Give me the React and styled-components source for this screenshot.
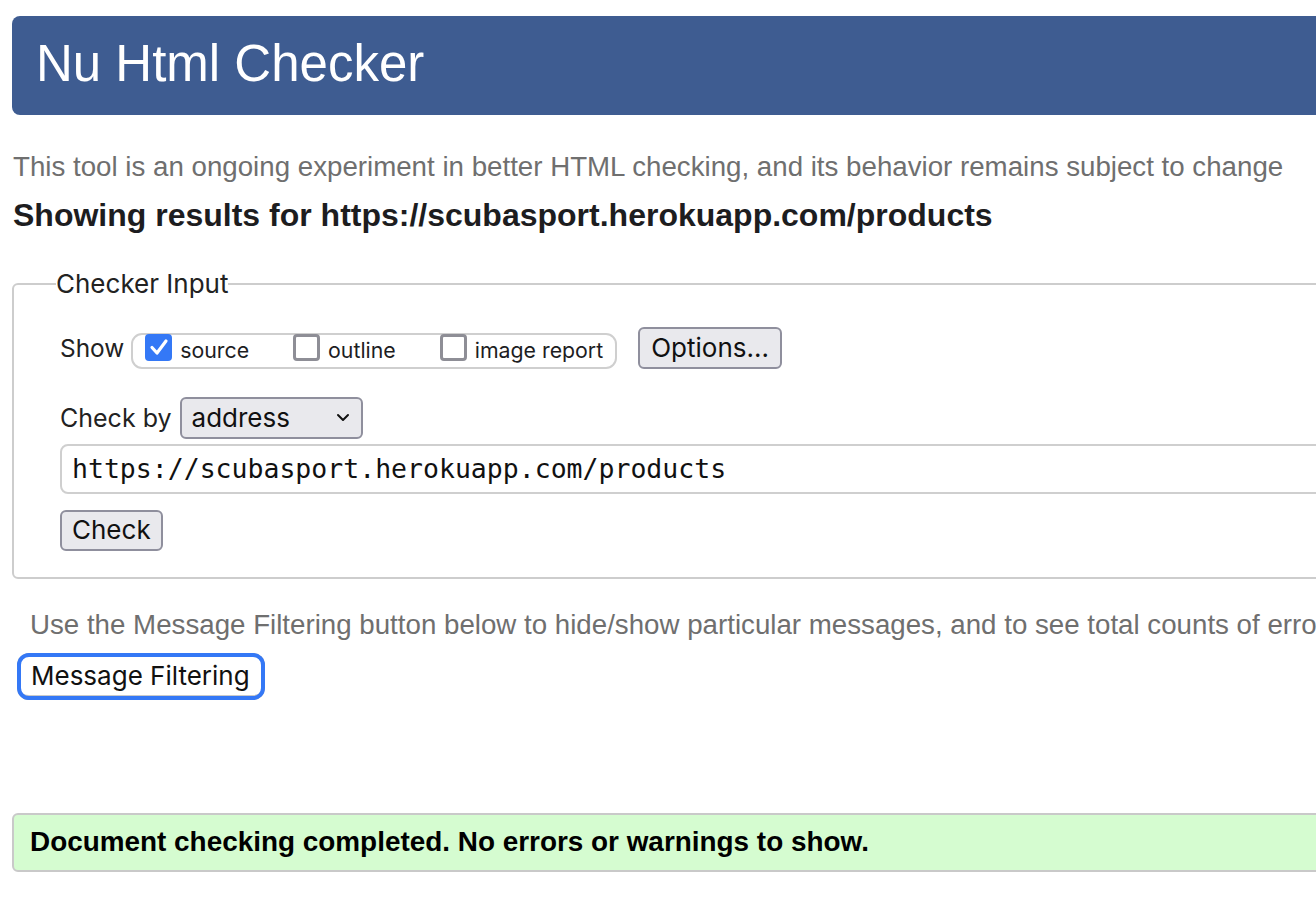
import React from "react";
import styled, { createGlobalStyle } from "styled-components";

const Global = createGlobalStyle`
  html, body { margin: 0; padding: 0; background: #fff; overflow: hidden; }
  body { font-family: "Liberation Sans", Arial, sans-serif; color: #222; }
`;

const Page = styled.div`
  width: 1560px;
  padding: 16px 0 0 12px;
  box-sizing: border-box;
`;

const Header = styled.header`
  height: 99px;
  background: #3e5c91;
  border-radius: 8px;
  padding: 0 0 4px 24px;
  box-sizing: border-box;
`;

const Title = styled.h1`
  margin: 0;
  font-family: "Liberation Sans", Arial, sans-serif;
  font-weight: 400;
  font-size: 51px;
  line-height: 95px;
  color: #fff;
`;

const Intro = styled.p`
  margin: 0;
  padding: 35.5px 0 0 1px;
  font-size: 27.7px;
  line-height: 32px;
  color: #6f6f6f;
  white-space: nowrap;
`;

const ResultsHeading = styled.h2`
  margin: 0;
  padding: 13px 0 0 1px;
  font-size: 32px;
  line-height: 38px;
  font-weight: 700;
  color: #1d1d1f;
  white-space: nowrap;
`;

const Fieldset = styled.fieldset`
  margin: 35.4px 0 0 0;
  padding: 28px 0 26px 46px;
  border: 2px solid #cdcdcd;
  border-radius: 6px;
  display: flex;
  flex-direction: column;
  align-items: flex-start;
  font-family: Inter, "Noto Sans", sans-serif;
`;

const Legend = styled.legend`
  margin-left: -4px;
  padding: 0;
  font-family: Inter, "Noto Sans", sans-serif;
  font-size: 26px;
  line-height: 30px;
  color: #222;
`;

const Row = styled.div`
  display: flex;
  align-items: ${(p) => p.$align || "center"};
  gap: ${(p) => p.$gap || 8}px;
  margin-top: ${(p) => p.$mt || 0}px;
`;

const Label = styled.span`
  font-size: ${(p) => p.$fs || 25}px;
  line-height: 30px;
  color: #222;
  white-space: nowrap;
  margin-top: ${(p) => p.$mt || 0}px;
`;

const Group = styled.div`
  display: flex;
  align-items: flex-start;
  height: 36px;
  box-sizing: border-box;
  border: 2px solid #cfcfcf;
  border-radius: 11px;
  padding: 0 12px;
  gap: 44px;
  margin-top: 6px;
  margin-right: 14px;
`;

const Option = styled.label`
  display: flex;
  align-items: flex-start;
  gap: 8px;
  font-size: 21.3px;
  line-height: 30px;
  color: #1d1d1f;
  white-space: nowrap;
`;

const Box = styled.span`
  width: 27px;
  height: 27px;
  flex: none;
  box-sizing: border-box;
  border-radius: 4px;
  display: inline-flex;
  align-items: center;
  justify-content: center;
  background: ${(p) => (p.$checked ? "#3478f6" : "#fff")};
  border: ${(p) => (p.$checked ? "none" : "3px solid #8e8e96")};
  margin-top: -1px;
`;

const Button = styled.button`
  font-family: Inter, "Noto Sans", sans-serif;
  font-size: 26px;
  color: #111;
  background: #e9e9ed;
  border: 2px solid #8f8f9d;
  border-radius: 6px;
  height: ${(p) => p.$h || 42}px;
  padding: 0 ${(p) => p.$px || 10}px;
  line-height: 1;
  cursor: default;
`;

const Select = styled.div`
  width: 183px;
  height: 42px;
  box-sizing: border-box;
  display: flex;
  align-items: center;
  justify-content: space-between;
  background: #e9e9ed;
  border: 2px solid #8f8f9d;
  border-radius: 6px;
  padding: 0 11px 0 10px;
  font-size: 26px;
  color: #111;
`;

const UrlInput = styled.div`
  margin-top: 5px;
  width: 1480px;
  height: 50px;
  box-sizing: border-box;
  border: 2px solid #cfcfcf;
  border-radius: 8px;
  display: flex;
  align-items: center;
  padding-left: 10px;
  font-family: "DejaVu Sans Mono", "Liberation Mono", monospace;
  font-size: 26.5px;
  color: #111;
`;

const Hint = styled.p`
  margin: 0;
  padding: 30.5px 0 0 18px;
  font-size: 27.7px;
  line-height: 32px;
  color: #6f6f6f;
  white-space: nowrap;
`;

const FilterButton = styled.button`
  display: block;
  margin: 11.5px 0 0 5px;
  height: 47px;
  width: 248px;
  box-sizing: border-box;
  background: #fff;
  border: 1px solid #b9b9b9;
  border-bottom-color: #9a9a9a;
  border-radius: 12px;
  outline: 3px solid #3478f6;
  outline-offset: -3px;
  box-shadow: inset 0 0 0 3px #3478f6, inset 0 -5px 0 -1px #c9c9c9;
  font-family: Inter, "Noto Sans", sans-serif;
  font-size: 26px;
  color: #111;
  text-align: left;
  padding: 0 0 2px 13px;
`;

const Success = styled.div`
  margin-top: 113px;
  height: 59px;
  box-sizing: border-box;
  background: #d5fcd0;
  border: 2px solid #c9c9c9;
  border-radius: 6px;
  display: flex;
  align-items: center;
  padding: 0 0 0 16px;
  font-size: 27.9px;
  font-weight: 700;
  color: #000;
`;

const Check = () => (
  <svg width="20" height="18" viewBox="0 0 20 18">
    <polyline points="3,9.5 8,15 17,3" fill="none" stroke="#fff" strokeWidth="3.2" strokeLinecap="round" strokeLinejoin="round" />
  </svg>
);

const Chevron = () => (
  <svg width="14" height="9" viewBox="0 0 14 9">
    <polyline points="2,2 7,7 12,2" fill="none" stroke="#111" strokeWidth="2" strokeLinecap="round" strokeLinejoin="round" />
  </svg>
);

export default function App() {
  return (
    <>
      <Global />
      <Page>
        <Header>
          <Title>Nu Html Checker</Title>
        </Header>
        <Intro>
          This tool is an ongoing experiment in better HTML checking, and its behavior remains subject to change
        </Intro>
        <ResultsHeading>Showing results for https://scubasport.herokuapp.com/products</ResultsHeading>
        <Fieldset>
          <Legend>Checker Input</Legend>
          <Row $gap={7} $align="flex-start">
            <Label $mt={6} $fs={24.4}>Show</Label>
            <Group>
              <Option>
                <Box $checked>
                  <Check />
                </Box>
                source
              </Option>
              <Option>
                <Box />
                outline
              </Option>
              <Option>
                <Box />
                image report
              </Option>
            </Group>
            <Button $px={11}>Options...</Button>
          </Row>
          <Row $gap={8} $mt={28}>
            <Label>Check by</Label>
            <Select>
              address
              <Chevron />
            </Select>
          </Row>
          <UrlInput>https://scubasport.herokuapp.com/products</UrlInput>
          <Row $mt={16}>
            <Button $h={41}>Check</Button>
          </Row>
        </Fieldset>
        <Hint>
          Use the Message Filtering button below to hide/show particular messages, and to see total counts of errors and warnings.
        </Hint>
        <FilterButton>Message Filtering</FilterButton>
        <Success>Document checking completed. No errors or warnings to show.</Success>
      </Page>
    </>
  );
}
